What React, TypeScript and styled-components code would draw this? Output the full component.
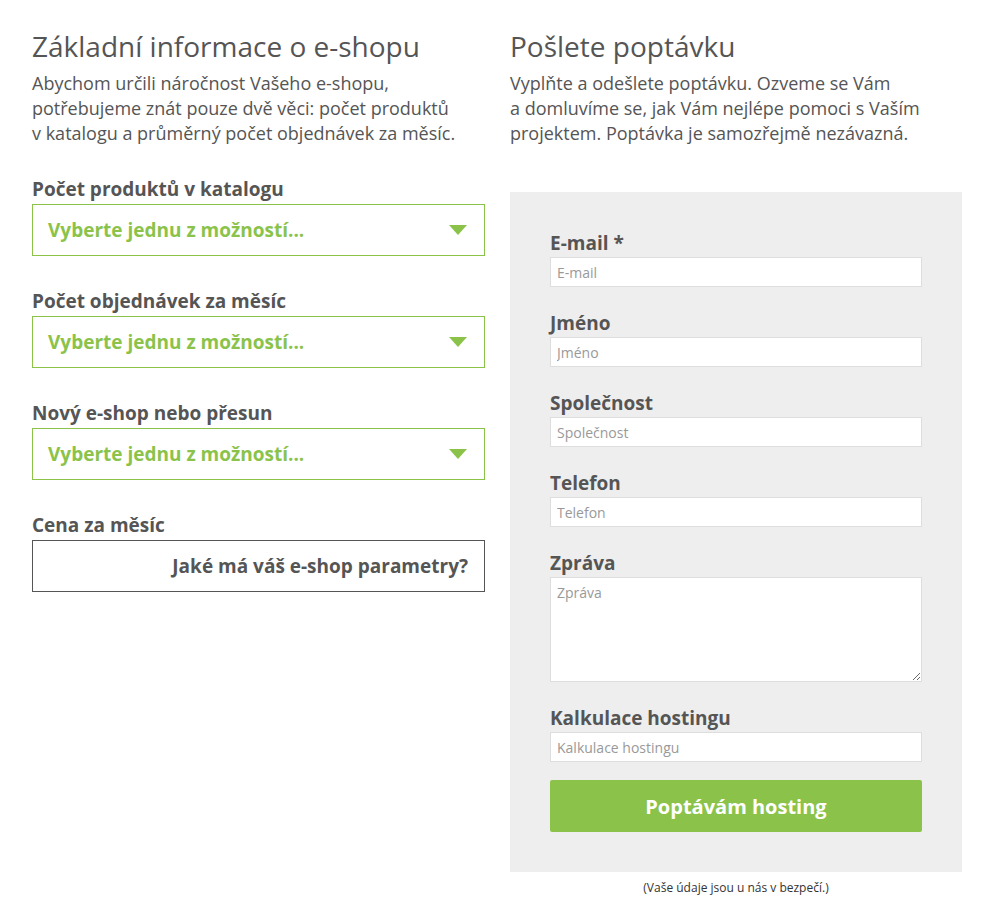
import styled, { createGlobalStyle } from "styled-components";

const GlobalStyle = createGlobalStyle`
    html, body {
        margin: 0;
        padding: 0;
        background: #ffffff;
    }
    body {
        font-family: "Open Sans", "Noto Sans", sans-serif;
        color: #555555;
    }
    * {
        box-sizing: border-box;
    }
`;

const leftSelects = [
    "Počet produktů v katalogu",
    "Počet objednávek za měsíc",
    "Nový e-shop nebo přesun",
];

const fields = [
    { label: "E-mail *", placeholder: "E-mail" },
    { label: "Jméno", placeholder: "Jméno" },
    { label: "Společnost", placeholder: "Společnost" },
    { label: "Telefon", placeholder: "Telefon" },
];

const App = () => {
    return (
        <>
            <GlobalStyle />
            <Page>
                <Column>
                    <Heading>Základní informace o e-shopu</Heading>
                    <Intro>
                        Abychom určili náročnost Vašeho e-shopu,
                        <br />
                        potřebujeme znát pouze dvě věci: počet produktů
                        <br />v katalogu a průměrný počet objednávek za měsíc.
                    </Intro>
                    <Groups>
                        {leftSelects.map((label) => (
                            <SelectGroup key={label}>
                                <BigLabel>{label}</BigLabel>
                                <SelectBox>
                                    <span>Vyberte jednu z možností...</span>
                                    <Arrow viewBox="0 0 18 10">
                                        <polygon points="0,0 18,0 9,10" />
                                    </Arrow>
                                </SelectBox>
                            </SelectGroup>
                        ))}
                        <SelectGroup>
                            <BigLabel>Cena za měsíc</BigLabel>
                            <PriceBox>Jaké má váš e-shop parametry?</PriceBox>
                        </SelectGroup>
                    </Groups>
                </Column>
                <Column>
                    <Heading>Pošlete poptávku</Heading>
                    <Intro>
                        Vyplňte a odešlete poptávku. Ozveme se Vám
                        <br />a domluvíme se, jak Vám nejlépe pomoci s Vaším
                        <br />
                        projektem. Poptávka je samozřejmě nezávazná.
                    </Intro>
                    <FormPanel>
                        {fields.map((f) => (
                            <Field key={f.label}>
                                <FieldLabel>{f.label}</FieldLabel>
                                <TextInput placeholder={f.placeholder} />
                            </Field>
                        ))}
                        <Field>
                            <FieldLabel>Zpráva</FieldLabel>
                            <TextArea placeholder="Zpráva" />
                        </Field>
                        <Field $last>
                            <FieldLabel>Kalkulace hostingu</FieldLabel>
                            <TextInput placeholder="Kalkulace hostingu" />
                        </Field>
                        <SubmitButton type="button">Poptávám hosting</SubmitButton>
                    </FormPanel>
                    <SafeNote>(Vaše údaje jsou u nás v bezpečí.)</SafeNote>
                </Column>
            </Page>
        </>
    );
};

const Page = styled.div`
    display: grid;
    grid-template-columns: 453px 452px;
    column-gap: 25px;
    padding: 29px 0 0 32px;
`;

const Column = styled.div`
    display: flex;
    flex-direction: column;
`;

const Heading = styled.h1`
    font-size: 28px;
    font-weight: 400;
    line-height: 34px;
    margin: 0 0 8px;
    color: #555555;
`;

const Intro = styled.p`
    font-size: 18px;
    line-height: 25px;
    margin: 0;
    color: #555555;
`;

const Groups = styled.div`
    margin-top: 31px;
    display: flex;
    flex-direction: column;
`;

const SelectGroup = styled.div`
    display: flex;
    flex-direction: column;
    margin-bottom: 33px;
`;

const BigLabel = styled.label`
    font-size: 19px;
    font-weight: 700;
    line-height: 24px;
    margin-bottom: 3px;
    color: #555555;
`;

const SelectBox = styled.div`
    height: 52px;
    border: 1px solid #8bc34a;
    display: flex;
    align-items: center;
    justify-content: space-between;
    padding: 0 17px 0 15px;
    font-size: 19px;
    font-weight: 700;
    color: #8bc34a;
`;

const Arrow = styled.svg`
    width: 18px;
    height: 10px;
    fill: #8bc34a;
`;

const PriceBox = styled.div`
    height: 52px;
    border: 1px solid #555555;
    display: flex;
    align-items: center;
    justify-content: flex-end;
    padding: 0 16px;
    font-size: 19px;
    font-weight: 700;
    color: #555555;
`;

const FormPanel = styled.form`
    margin-top: 46px;
    background: #eeeeee;
    padding: 39px 40px 40px 40px;
    display: flex;
    flex-direction: column;
`;

const Field = styled.div<{ $last?: boolean }>`
    display: flex;
    flex-direction: column;
    margin-bottom: ${({ $last }) => ($last ? "18px" : "24px")};
`;

const FieldLabel = styled.label`
    font-size: 19px;
    font-weight: 700;
    line-height: 24px;
    margin-bottom: 2px;
    color: #555555;
`;

const TextInput = styled.input`
    height: 30px;
    border: 1px solid #dddddd;
    background: #ffffff;
    padding: 0 6px;
    font-family: "Open Sans", sans-serif;
    font-size: 14px;
    color: #555555;
    outline: none;

    &::placeholder {
        color: #999999;
    }
`;

const TextArea = styled.textarea`
    height: 105px;
    border: 1px solid #dddddd;
    background: #ffffff;
    padding: 5px 6px;
    font-family: "Open Sans", sans-serif;
    font-size: 14px;
    color: #555555;
    outline: none;
    resize: vertical;

    &::placeholder {
        color: #999999;
    }
`;

const SubmitButton = styled.button`
    height: 52px;
    border: none;
    border-radius: 2px;
    background: #8bc34a;
    color: #ffffff;
    font-family: "Open Sans", sans-serif;
    font-size: 20px;
    font-weight: 700;
    cursor: pointer;
`;

const SafeNote = styled.p`
    margin: 8px 0 0;
    text-align: center;
    font-size: 12px;
    line-height: 16px;
    color: #333333;
`;

export default App;
